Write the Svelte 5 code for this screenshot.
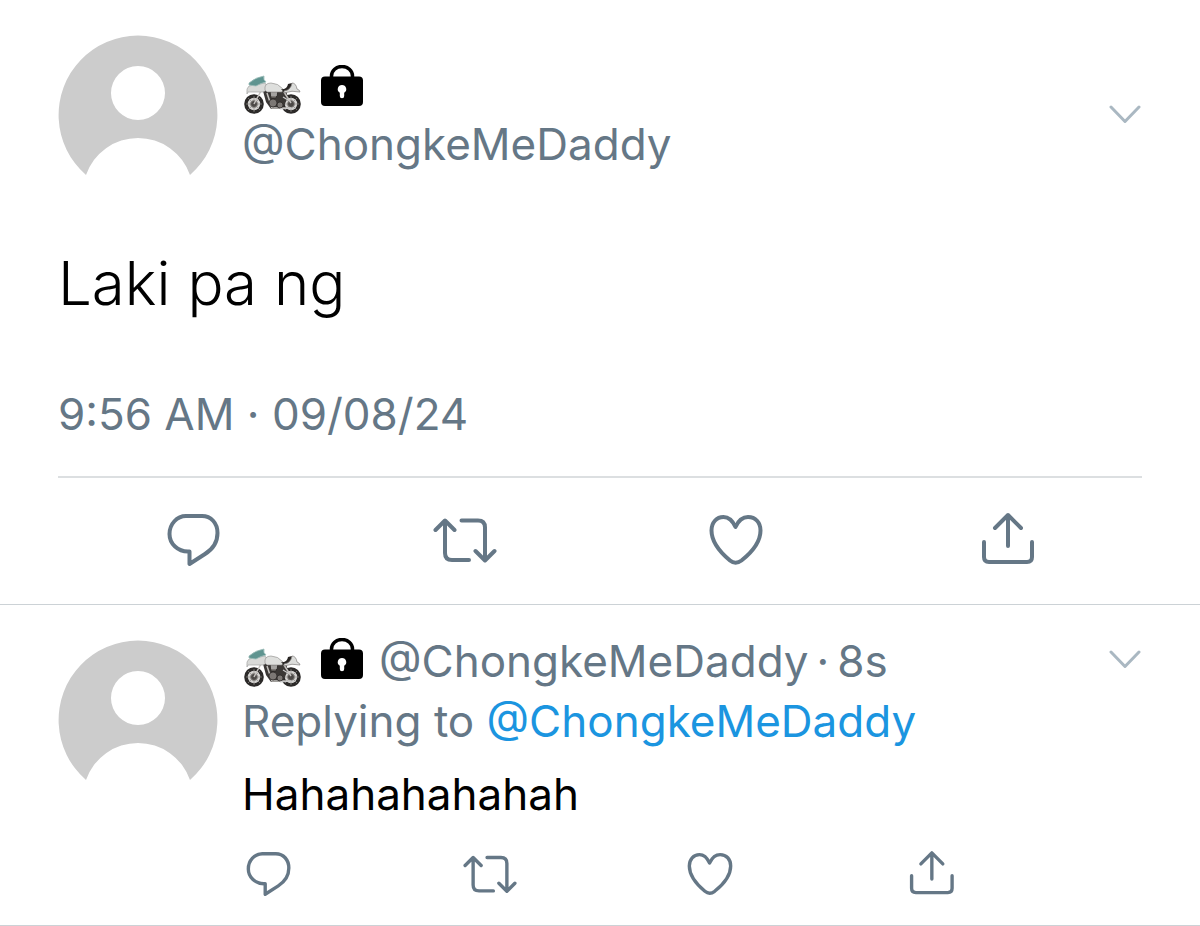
<script>
  const handle = '@ChongkeMeDaddy';
  const actions = [
    { label: 'Reply', d: 'M24 8H40C49 8 55.5 15 55.5 25C55.5 34 51 41 43 46L27.5 56V43.5H26C16 43.5 7.5 36 7.5 26C7.5 16 15 8 24 8Z' },
    { label: 'Repost', d: 'M2.5 22L12 12.5L21.500 22M12 13V45Q12 52 19 52H36M28.500 12.500H45Q52 12.500 52 19.500V51M42.500 43L52 52.500L61.500 43' },
    { label: 'Like', d: 'M31.500 19C28.500 12.500 25 9 19.500 9C12.500 9 7.500 14.500 7.500 22.500C7.500 34 17 45 26 52.500Q31.500 57 37.500 52.500C47 45 56.500 34 56.500 22.500C56.500 14.500 51.500 9 44 9C38.500 9 34.500 12.500 31.500 19Z' },
    { label: 'Share', d: 'M20 20L33 7L46 20M33 7V38M9 34V49Q9 54 14 54H52Q57 54 57 49V34' }
  ];
</script>

{#snippet avatar()}
  <svg class="avatar" viewBox="0 0 160 160" role="img" aria-label="Profile picture">
    <path fill="#ccc" fill-rule="evenodd" d="M28 140A79.400 79.400 0 1 1 132 140A55 55 0 0 0 28 140ZM80 31A27 27 0 1 0 80 85A27 27 0 1 0 80 31Z" />
  </svg>
{/snippet}

{#snippet badges()}
  <span class="badges">
    <svg class="bike" viewBox="0 0 60 42" role="img" aria-label="Motorcycle">
      <g fill="#d6d5d3" stroke="#2c2a29" stroke-width="3.600">
        <circle cx="11" cy="30" r="8" /><circle cx="48" cy="30" r="8" />
      </g>
      <path stroke="#8d8a88" stroke-width=".7" d="M11 22V38M3 30H19M5 24L17 36M17 24L5 36M48 22V38M40 30H56M42 24L54 36M54 24L42 36" />
      <g fill="#4c4947" stroke="#8f8c89" stroke-width="1">
        <circle cx="11" cy="30" r="3.500" /><circle cx="48" cy="30" r="3.500" />
      </g>
      <path fill="#3b3836" d="M20 17H43L45 23L41 32L37 35H28L23 28Z" />
      <path fill="none" stroke="#c4c1be" stroke-width="1.500" d="M19 15L11 30M24 19L29 34H48M41 18L48 29" />
      <g fill="#7c7875" stroke="#252321" stroke-width=".7">
        <circle cx="30" cy="29" r="4" /><circle cx="37" cy="31" r="3" /><path d="M27 18H35L33 24H28Z" />
      </g>
      <path stroke="#ccc" stroke-width="1.200" d="M28 19H34M28 21H34M40 23L45 26M37 35L51 34" />
      <path fill="#d9dad8" stroke="#999" stroke-width=".6" d="M6 12L22 9L26 15L20 18H8Q4 17 4 20Q3 14 6 12Z" />
      <path fill="#5f9490" stroke="#9cbdb9" stroke-width=".8" d="M6 9Q13 3 21 2Q20 6 23 8Q18 9 13 12L6 11Z" />
      <path fill="#dedfdd" stroke="#8a8886" stroke-width=".6" d="M22 16Q21 9 28 9Q35 9 40 15L39 18H24Z" />
      <path fill="#282523" d="M38 15Q44 16 45 10L49 9L48 16L41 18Z" />
      <path fill="#dcdddb" stroke="#817e7c" stroke-width=".7" d="M41 17Q48 16 49 9Q53 9 54 15Q57 16 57 18Q49 16 41 19Z" />
    </svg>
    <svg class="lock" viewBox="0 0 42 42" role="img" aria-label="Protected account">
      <path fill="none" stroke="#000" stroke-width="3.500" d="M10.500 14V11A10.500 9.500 0 0 1 31.500 11V14" />
      <path fill-rule="evenodd" d="M4 11.500H38Q42 11.500 42 15.500V37Q42 41 38 41H4Q0 41 0 37V15.500Q0 11.500 4 11.500ZM21 20A4.200 4.200 0 0 0 18.800 27.800V31A2.200 2.200 0 0 0 23.200 31V27.800A4.200 4.200 0 0 0 21 20Z" />
    </svg>
  </span>
{/snippet}

{#snippet more()}
  <button class="more" aria-label="More options">
    <svg viewBox="0 0 34 20"><path d="M3 2L17 16.500L31 2" /></svg>
  </button>
{/snippet}

{#snippet bar()}
  {#each actions as action}
    <button aria-label={action.label}><svg viewBox="0 0 64 64"><path d={action.d} /></svg></button>
  {/each}
{/snippet}

<main>
  <article class="post">
    <header>
      {@render avatar()}
      <div class="who">
        {@render badges()}
        <a class="handle" href="#profile">{handle}</a>
      </div>
      {@render more()}
    </header>
    <p class="body">Laki pa ng</p>
    <div class="time"><time>9:56 AM · 09/08/24</time></div>
    <div class="actions">{@render bar()}</div>
  </article>

  <article class="reply">
    {@render avatar()}
    <div class="content">
      <div class="line">
        {@render badges()}
        <div class="meta">
          <a class="handle" href="#profile">{handle}</a>
          <span>·</span>
          <span>8s</span>
        </div>
      </div>
      <div class="context">Replying to <a href="#profile">{handle}</a></div>
      <p class="text">Hahahahahahah</p>
      <div class="small-actions">{@render bar()}</div>
    </div>
    {@render more()}
  </article>
</main>

<style>
  :global(body) {
    margin: 0;
    background: #fff;
  }
  main {
    font-family: Inter, "Liberation Sans", sans-serif;
    font-size: 44px;
    line-height: 60px;
    color: #657786;
  }
  svg {
    display: block;
  }
  p {
    margin: 0;
    color: #000;
  }
  a {
    color: inherit;
    text-decoration: none;
  }
  button {
    display: block;
    padding: 0;
    border: 0;
    background: none;
    color: inherit;
    cursor: pointer;
  }
  button path {
    fill: none;
    stroke: currentColor;
    stroke-width: 4;
    stroke-linecap: round;
    stroke-linejoin: round;
  }
  .post {
    padding: 35px 58px 0;
    border-bottom: 1px solid #ccd2d6;
  }
  header {
    display: flex;
    gap: 24px;
  }
  .avatar {
    flex: none;
    width: 160px;
    height: 160px;
  }
  .who {
    flex: 1;
    padding-top: 30px;
  }
  .who .handle {
    display: block;
    margin-top: -2px;
  }
  .badges {
    display: flex;
    align-items: flex-start;
    gap: 18px;
    padding-left: 1px;
  }
  .bike {
    width: 60px;
    height: 42px;
    margin-top: 9px;
    flex: none;
  }
  .lock {
    width: 42px;
    height: 42px;
    flex: none;
  }
  .more {
    flex: none;
    align-self: flex-start;
    margin-top: 70px;
    color: #aab8c2;
  }
  .more svg {
    width: 34px;
    height: 20px;
  }
  .more path {
    stroke-width: 3;
  }
  .body {
    margin-top: 48px;
    font-size: 60px;
    line-height: 80px;
    font-weight: 300;
  }
  .time {
    margin-top: 61px;
    padding-bottom: 32px;
    border-bottom: 2px solid #dcdfe1;
  }
  .actions {
    display: grid;
    grid-template-columns: repeat(4, 1fr);
    justify-items: center;
    padding: 30px 0 32px;
  }
  .actions svg {
    width: 64px;
    height: 64px;
  }
  .reply {
    display: flex;
    gap: 24px;
    padding: 35px 58px 24px;
    border-bottom: 1px solid #ccd2d6;
  }
  .content {
    flex: 1;
    min-width: 0;
    margin-top: -9px;
  }
  .line {
    display: flex;
    align-items: flex-start;
    gap: 16px;
  }
  .line .badges {
    padding-top: 7px;
  }
  .meta {
    display: flex;
    gap: 8px;
  }
  .context a {
    color: #1b95e0;
  }
  .text {
    margin-top: 13px;
  }
  .small-actions {
    display: flex;
    justify-content: space-between;
    max-width: 716px;
    margin-top: 23px;
  }
  .small-actions svg {
    width: 54px;
    height: 54px;
  }
  .reply .more {
    margin-top: 10px;
  }
</style>
